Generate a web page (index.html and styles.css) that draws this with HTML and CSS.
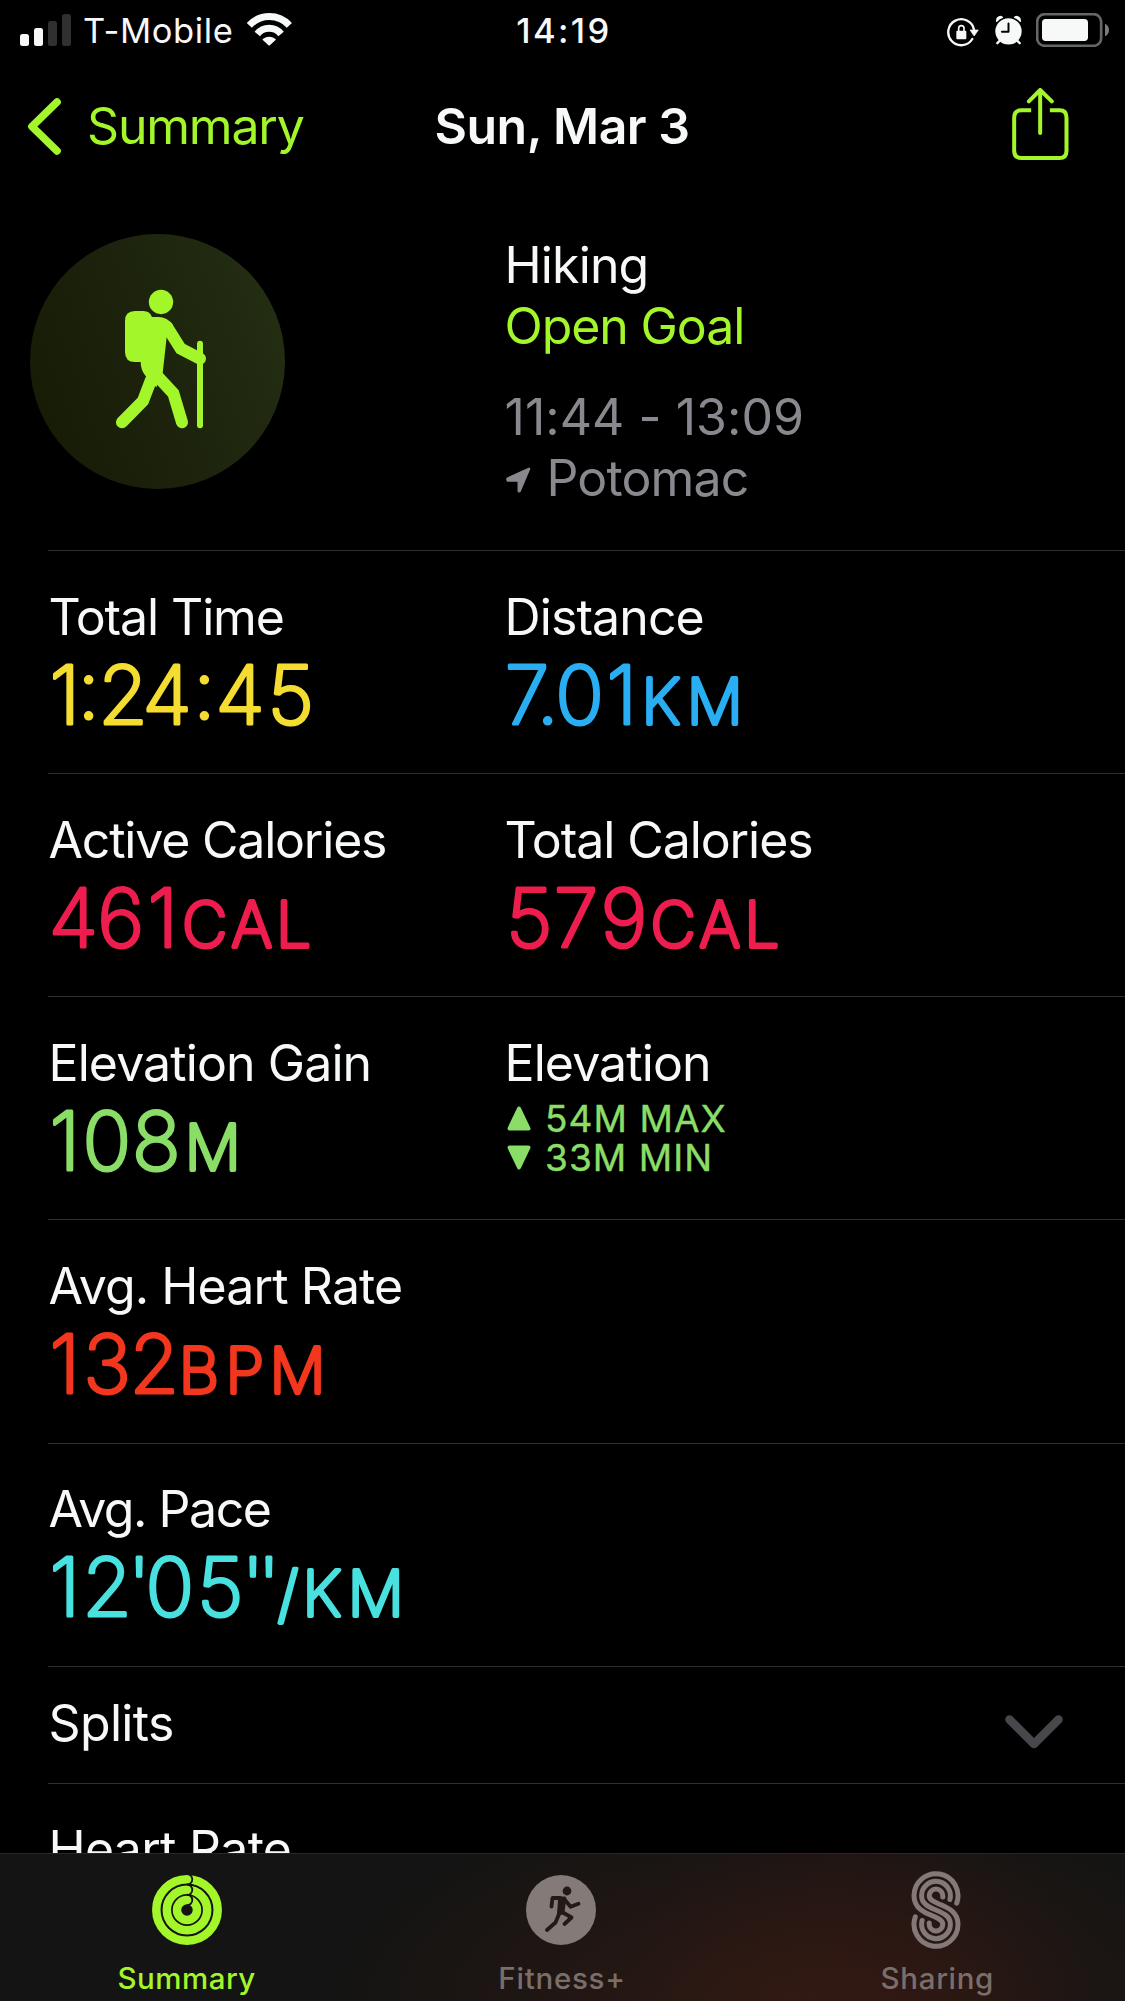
FILE: index.html
```
<!DOCTYPE html>
<html lang="en">
<head>
<meta charset="utf-8">
<title>Sun, Mar 3 – Hiking</title>
<link rel="stylesheet" href="styles.css">
</head>
<body>
<div class="app">
  <header class="status">
    <div class="status-left">
      <svg class="signal" viewBox="0 0 51 32"><g fill="#f7f8f8"><rect y="20" width="9" height="12" rx="2.5"/><rect x="14" y="14" width="9" height="18" rx="2.5"/></g><g fill="#303030"><rect x="28" y="7" width="9" height="25" rx="2.5"/><rect x="42" width="9" height="32" rx="2.5"/></g></svg>
      <span class="carrier">T-Mobile</span>
      <svg class="wifi" viewBox="740 38 136 99" fill="none" stroke="#f7f8f8" stroke-width="21"><path d="M747 75A82 82 0 0 1 868 75"/><path d="M771 101A46 46 0 0 1 843 101"/><path d="M789 118Q807 105 825 118L807 134Z" fill="#f7f8f8" stroke-width="4" stroke-linejoin="round"/></svg>
    </div>
    <span class="clock">14:19</span>
    <div class="status-right">
      <svg class="lock" viewBox="140 50 96 90" fill="none" stroke="#f7f8f8"><path d="M216 116A39 39 0 1 1 221 88" stroke-width="7" stroke-linecap="round"/><path d="M209 89H234L221.500 107Z" fill="#f7f8f8" stroke-width="2" stroke-linejoin="round"/><rect x="168" y="91" width="30" height="26" rx="3" fill="#f7f8f8" stroke="none"/><path d="M175 93V84a8 8 0 0 1 16 0v9" stroke-width="5"/></svg>
      <svg class="alarm" viewBox="284 46 82 90"><g fill="none" stroke="#f7f8f8" stroke-width="7" stroke-linecap="round"><path d="M298 124L291 131M352 124L359 131"/></g><path d="M287 66Q286 49 302 48Q308 49 309 54Q296 58 290 67ZM363 66Q364 49 348 48Q342 49 341 54Q354 58 360 67Z" fill="#f7f8f8"/><circle cx="325" cy="95" r="40" fill="#f7f8f8"/><path d="M325 71V96H305" fill="none" stroke="#000" stroke-width="6" stroke-linecap="round" stroke-linejoin="round"/></svg>
      <svg class="battery" viewBox="408 39 219 102"><rect x="411.500" y="42.500" width="192" height="95" rx="23" fill="none" stroke="#666" stroke-width="8"/><rect x="426" y="57" width="138" height="66" rx="11" fill="#f7f8f8"/><path d="M615 71Q627 77 627 90T615 109Z" fill="#7c7c7c"/></svg>
    </div>
  </header>

  <nav class="nav">
    <a class="back"><svg class="back-icon" viewBox="84 291 100 172"><path d="M172 303L96 377L172 451" fill="none" stroke="currentColor" stroke-width="23" stroke-linecap="round" stroke-linejoin="round"/></svg><span>Summary</span></a>
    <h1 class="title">Sun, Mar 3</h1>
    <svg class="share" viewBox="336 264 170 216" fill="none" stroke="currentColor" stroke-width="12"><path d="M393 331H364Q342 331 342 353V452Q342 474 364 474H478Q499 474 499 452V353Q499 331 478 331H449"/><path d="M420 271V399M386 304L420 270L455 304" stroke-linecap="round" stroke-linejoin="round"/></svg>
  </nav>

  <main class="content">
    <section class="hero">
      <div class="badge">
        <svg viewBox="30 42 765 765" fill="none" stroke="currentColor" stroke-width="36" stroke-linecap="round"><g fill="currentColor" stroke="none"><circle cx="423" cy="246" r="36.500"/><path d="M345 273H370Q390 273 396 291H415Q442 291 459 315L440 352L428 460L409 502L377 468Q362 450 362 426H345Q315 426 315 396V303Q315 273 345 273Z"/></g><path d="M442 322L482 386L540 416"/><path d="M410 466L460 520L486 607"/><path d="M393 480L369 543L306 607"/><path d="M540 371V616" stroke-width="18"/></svg>
      </div>
      <div class="hero-text">
        <p>Hiking</p>
        <p class="goal">Open Goal</p>
        <p class="when">11:44 - 13:09</p>
        <p class="where"><svg class="arrow" viewBox="79 742 74 78"><path d="M83 775L147 746Q150 745 149 749L121 815Q117 819 115 814V784H83Q79 780 83 775Z" fill="currentColor" stroke="currentColor" stroke-width="4" stroke-linejoin="round"/></svg><span>Potomac</span></p>
      </div>
    </section>

    <section class="row">
      <div class="metric"><p class="label t108">Total Time</p>
        <svg class="value yellow"><text><tspan x="-.4" y="77">1</tspan><tspan x="27.5" y="71.500">:</tspan><tspan x="48.2 92.5" y="77">24</tspan><tspan x="143.3" y="71.500">:</tspan><tspan x="165.5 217.5" y="77">45</tspan></text></svg></div>
      <div class="metric"><p class="label t77">Distance</p>
        <svg class="value blue"><text y="77" x="-1.2 30.6 49.3 100.6">7.01<tspan class="unit" x="135.4 180.7">KM</tspan></text></svg></div>
    </section>
    <section class="row">
      <div class="metric"><p class="label t124">Active Calories</p>
        <svg class="value pink"><text y="77" x="-1.2 47.2 97.6">461<tspan class="unit" x="132 181.3 226">CAL</tspan></text></svg></div>
      <div class="metric"><p class="label t102">Total Calories</p>
        <svg class="value pink"><text y="77" x="0 47.8 94.500">579<tspan class="unit" x="144.5 193.3 238.3">CAL</tspan></text></svg></div>
    </section>
    <section class="row">
      <div class="metric"><p class="label t83">Elevation Gain</p>
        <svg class="value green"><text y="77" x="-.4 32.4 82">108<tspan class="unit" x="134.7">M</tspan></text></svg></div>
      <div class="metric"><p class="label t90">Elevation</p>
        <div class="range green">
          <p><svg viewBox="0 0 24 25"><path d="M12 2.500L21.500 22.500H2.500Z"/></svg><span>54M MAX</span></p>
          <p><svg viewBox="0 0 24 25"><path d="M12 22.500L21.500 2.500H2.500Z"/></svg><span>33M MIN</span></p>
        </div></div>
    </section>
    <section class="row row-tall">
      <div class="metric"><p class="label t90">Avg. Heart Rate</p>
        <svg class="value red"><text y="77" x="-.4 33.2 79.6">132<tspan class="unit" x="128.7 175.4 219.4">BPM</tspan></text></svg></div>
    </section>
    <section class="row row-pace">
      <div class="metric"><p class="label t149">Avg. Pace</p>
        <svg class="value cyan"><text y="77" x="-.4 32.3 77.8 95.4 147 191.5 207.5">12'05''<tspan class="unit" x="227.5 252.4 297.7">/KM</tspan></text></svg></div>
    </section>
    <section class="row splits">
      <p class="label t66">Splits</p>
      <svg class="chevron" viewBox="0 0 58 34"><path d="M4.500 4.500L29 29L53.500 4.500" fill="none" stroke="#48474c" stroke-width="8.500" stroke-linecap="round" stroke-linejoin="round"/></svg>
    </section>
    <section class="row heart"><p class="label t61">Heart Rate</p></section>
  </main>

  <footer class="tabs">
    <a class="tab active">
      <svg viewBox="-40 -40 80 80" fill="none" stroke="currentColor" stroke-width="8.500"><circle r="30.700"/><circle r="20.200"/><circle r="10"/><g stroke="#131413" stroke-width="1.800"><path d="M0 -36A5.300 5.300 0 0 1 0 -25.400"/><path d="M0 -25.500A5.300 5.300 0 0 1 0 -14.900"/><path d="M0 -15.300A5.300 5.300 0 0 1 0 -4.700"/></g></svg>
      <span class="sum">Summary</span></a>
    <a class="tab">
      <svg viewBox="-40 -40 80 80"><circle r="35" fill="#847b78"/><g fill="none" stroke="#231917" stroke-width="3.800" stroke-linecap="round" stroke-linejoin="round"><circle cx="6" cy="-19" r="4.400" fill="#231917" stroke="none"/><path d="M-1 -11.500L3.500 -11.500L1.500 2.500L-2 3Z" fill="#231917"/><path d="M4 -10L9.600 -3.300L17.500 -6.200M-1 -12H-8.500L-9.500 -3.500M1 2L10.500 7.500L3.500 14M-1.500 3L-5.500 12.500L-14 20"/></g></svg>
      <span class="fit">Fitness+</span></a>
    <a class="tab">
      <svg viewBox="-40 -40 80 80" fill="none" stroke="#857977" stroke-width="5" stroke-linecap="round"><path d="M20.700 -6.800A22 22 0 1 0 -22 -14.300C-22 -2 -12 2.500 -3 6C3 8.500 6.800 10.500 6.800 14.300A6.800 6.800 0 0 1 -6.800 14.300V13"/><path d="M13.900 -10.500A14.400 14.400 0 1 0 -14.400 -14.300C-14.400 -6 -7 -3 0 0S14.400 6 14.400 14.300A14.400 14.400 0 1 1 -13.900 10.500"/><path d="M6.800 -13V-14.300A6.800 6.800 0 0 0 -6.800 -14.300C-6.800 -10.500 -3 -8.500 3 -6C12 -2.500 22 2 22 14.300A22 22 0 1 1 -20.700 6.800"/></svg>
      <span class="shr">Sharing</span></a>
  </footer>
</div>
</body>
</html>
```
FILE: styles.css
```
* { box-sizing: border-box; }
body { margin: 0; background: #000; color: #f7f8f8; font-family: Inter, "Liberation Sans", sans-serif; }
p, h1 { margin: 0; font-weight: 400; white-space: nowrap; }
svg { display: block; flex: none; }

.app { width: 1125px; height: 2001px; display: flex; flex-direction: column; overflow: hidden; font-size: 50px; }

/* status bar */
.status { height: 62px; display: grid; grid-template-columns: 1fr auto 1fr; font-size: 34.5px; line-height: 62px; }
.status-left { display: flex; padding-left: 20px; }
.signal { width: 51px; height: 32px; margin-top: 14px; }
.carrier { margin-left: 12px; letter-spacing: .65px; }
.wifi { width: 45px; height: 33px; margin: 13px 0 0 13px; }
.clock { font-weight: 500; letter-spacing: 2.4px; padding-left: 3px; }
.status-right { display: flex; justify-content: flex-end; padding-right: 16px; }
.lock { width: 32px; height: 30px; margin: 17px 16px 0 0; }
.alarm { width: 27px; height: 30px; margin: 15px 14px 0 0; }
.battery { width: 73px; height: 34px; margin-top: 13px; }

/* navigation */
.nav { height: 128px; display: grid; grid-template-columns: 1fr auto 1fr; align-items: center; line-height: 60px; color: #a3f629; }
.back { display: flex; align-items: center; padding-left: 28px; letter-spacing: -1.2px; }
.back-icon { width: 33px; height: 57px; margin-right: 26px; }
.title { font-size: 50px; font-weight: 600; letter-spacing: -.55px; padding-right: 1px; color: #f7f8f8; }
.share { width: 57px; height: 72px; justify-self: end; margin: -4px 56px 0 0; }

.content { flex: 1; min-height: 0; overflow: hidden; padding-top: 44px; }

/* workout summary */
.hero { height: 316px; display: grid; grid-template-columns: 474px 1fr; padding-left: 30px; }
.badge { width: 255px; height: 255px; border-radius: 50%; color: #a3f629; background: linear-gradient(70deg, #161b05 5%, #1c220c 45%, #242f13 95%); }
.hero-text { line-height: 61px; letter-spacing: -.85px; padding: 1px 0 0 .5px; }
.goal { color: #a3f629; letter-spacing: -1.1px; }
.when { margin-top: 30px; color: #89888e; letter-spacing: .05px; }
.where { display: flex; color: #89888e; letter-spacing: -.85px; }
.arrow { width: 25px; height: 26px; margin: 19px 15px 0 1px; }
.where span { padding-left: 1px; }

/* metrics */
.row { height: 223px; margin-left: 48px; padding-top: 36px; border-top: 1px solid #2f2f31; display: grid; grid-template-columns: 456px 1fr; }
.row-tall { height: 224px; }
.row-pace { padding-top: 35px; }
.label { height: 60px; line-height: 60px; padding-left: .5px; }
.t61 { letter-spacing: -.72px; } .t66 { letter-spacing: -.66px; } .t77 { letter-spacing: -.9px; }
.t83 { letter-spacing: -.9px; } .t90 { letter-spacing: -.9px; } .t102 { letter-spacing: -1.08px; }
.t108 { letter-spacing: -1.12px; } .t124 { letter-spacing: -1.2px; } .t149 { letter-spacing: -1.45px; }
.value { width: 380px; height: 92px; margin-left: 2px; overflow: visible; font: 250 80.5px Inter, sans-serif; font-feature-settings: "calt" 0; fill: currentColor; stroke: currentColor; stroke-width: 3.2; stroke-linejoin: round; }
.unit { font-size: 62.5px; stroke-width: 3.8; }
.range { margin: 6px 0 0 3px; font-size: 37px; line-height: 39px; letter-spacing: 1.05px; -webkit-text-stroke: .4px currentColor; }
.range p { display: flex; }
.range svg { width: 24px; height: 25px; margin: 7px 14px 0 0; fill: currentColor; stroke: currentColor; stroke-width: 4; stroke-linejoin: round; }
.yellow { color: #f5dc31; }
.blue { color: #29aef3; }
.pink { color: #ed1d4e; }
.green { color: #8add67; }
.red { color: #f2371e; }
.cyan { color: #49e1df; }
.splits { height: 117px; padding-top: 26px; grid-template-columns: 1fr auto; }
.chevron { width: 58px; height: 34px; margin: 22px 62px 0 0; }
.heart { padding-top: 35px; }

/* tab bar */
.tabs { height: 148px; display: grid; grid-template-columns: repeat(3, 1fr); border-top: 1px solid #2a2827; padding-right: 2px;
  background:
    radial-gradient(ellipse 230px 200px at 860px 100%, rgba(60, 24, 18, .45), transparent),
    radial-gradient(ellipse 470px 210px at 790px 100%, rgba(52, 26, 20, .8), transparent),
    #131413; }
.tab { display: flex; flex-direction: column; align-items: center; padding-top: 16px; color: #7a6e6b; font-size: 29.5px; font-weight: 500; line-height: 36px; }
.tab svg { width: 80px; height: 80px; margin-bottom: 10px; }
.active { color: #a3f629; }
.sum { letter-spacing: .5px; padding-right: 1px; }
.fit { letter-spacing: .74px; padding-left: 1px; }
.shr { letter-spacing: .66px; padding-left: 3px; }
```
